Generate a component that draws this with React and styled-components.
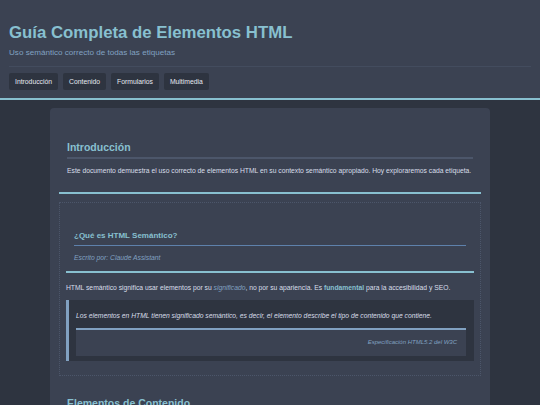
import styled, { createGlobalStyle } from 'styled-components';

const GlobalStyle = createGlobalStyle`
  html, body {
    margin: 0;
    padding: 0;
    background: #2e3440;
    font-family: "Liberation Sans", Arial, sans-serif;
    color: #d8dee9;
  }
  * { box-sizing: border-box; }
`;

const Header = styled.header`
  background: #3b4252;
  border-bottom: 2px solid #88c0d0;
  padding: 22px 9px 8px;
`;

const Title = styled.h1`
  margin: 0;
  font-size: 16.8px;
  line-height: 22px;
  color: #88c0d0;
`;

const Subtitle = styled.p`
  margin: 4px 0 8px;
  font-size: 8.1px;
  line-height: 10px;
  color: #81a1c1;
`;

const Nav = styled.nav`
  display: flex;
  gap: 5px;
  border-top: 1px solid #434c5e;
  padding-top: 6px;
`;

const NavButton = styled.a`
  display: flex;
  align-items: center;
  height: 17px;
  padding: 0 6px;
  background: #2e3440;
  border-radius: 2px;
  font-size: 6.8px;
  color: #e5e9f0;
`;

const Main = styled.main`
  padding-top: 8px;
`;

const Card = styled.div`
  width: 440px;
  margin: 0 auto;
  background: #3b4252;
  border-radius: 4px;
  padding: 20px 9px 0;
`;

const Section = styled.section`
  padding: ${(p) => (p.$last ? '20px 8px 10px' : '12px 8px 17px')};
  border-bottom: ${(p) => (p.$last ? 'none' : '2px solid #88c0d0')};
`;

const H2 = styled.h2`
  margin: 0;
  font-size: 10.5px;
  line-height: 14px;
  color: #88c0d0;
  padding-bottom: ${(p) => (p.$plain ? '0' : '3px')};
  border-bottom: ${(p) => (p.$plain ? 'none' : '2px solid #4c566a')};
`;

const Text = styled.p`
  margin: ${(p) => p.$margin || '7px 0 0'};
  font-size: 6.75px;
  line-height: 9px;
  color: #d8dee9;
`;

const Article = styled.article`
  margin-top: 8px;
  border: 1px dotted #4c566a;
  padding: 0 6px 14px;
`;

const ArticleHeader = styled.header`
  padding: 27px 8px 9px;
  border-bottom: 2px solid #88c0d0;
`;

const H3 = styled.h3`
  margin: 0;
  font-size: 8px;
  line-height: 11px;
  color: #88c0d0;
  padding-bottom: 4px;
  border-bottom: 1px solid #5e81ac;
`;

const Byline = styled.p`
  margin: 7px 0 0;
  font-size: 6.75px;
  line-height: 9px;
  font-style: italic;
  color: #81a1c1;
`;

const Em = styled.em`
  color: #81a1c1;
`;

const Strong = styled.strong`
  color: #88c0d0;
`;

const Quote = styled.blockquote`
  margin: 8px 0 0;
  background: #2e3440;
  border-left: 3px solid #81a1c1;
  padding: 11px 8px 5px 7px;
`;

const QuoteText = styled.p`
  margin: 0;
  font-size: 6.75px;
  line-height: 9px;
  font-style: italic;
  color: #d8dee9;
`;

const QuoteFooter = styled.footer`
  margin-top: 8px;
  background: #3b4252;
  border-top: 2px solid #81a1c1;
  padding: 8px 9px 10px;
  text-align: right;
  font-size: 6px;
  line-height: 8px;
  font-style: italic;
  color: #81a1c1;
`;

export default function App() {
  return (
    <>
      <GlobalStyle />
      <Header>
        <Title>Guía Completa de Elementos HTML</Title>
        <Subtitle>Uso semántico correcto de todas las etiquetas</Subtitle>
        <Nav>
          <NavButton>Introducción</NavButton>
          <NavButton>Contenido</NavButton>
          <NavButton>Formularios</NavButton>
          <NavButton>Multimedia</NavButton>
        </Nav>
      </Header>
      <Main>
        <Card>
          <Section>
            <H2>Introducción</H2>
            <Text>
              Este documento demuestra el uso correcto de elementos HTML en su contexto semántico
              apropiado. Hoy exploraremos cada etiqueta.
            </Text>
          </Section>
          <Article>
            <ArticleHeader>
              <H3>¿Qué es HTML Semántico?</H3>
              <Byline>Escrito por: Claude Assistant</Byline>
            </ArticleHeader>
            <Text $margin="10px 0 0">
              HTML semántico significa usar elementos por su <Em>significado</Em>, no por su
              apariencia. Es <Strong>fundamental</Strong> para la accesibilidad y SEO.
            </Text>
            <Quote>
              <QuoteText>
                Los elementos en HTML tienen significado semántico, es decir, el elemento describe el
                tipo de contenido que contiene.
              </QuoteText>
              <QuoteFooter>Especificación HTML5.2 del W3C</QuoteFooter>
            </Quote>
          </Article>
          <Section $last>
            <H2 $plain>Elementos de Contenido</H2>
          </Section>
        </Card>
      </Main>
    </>
  );
}
